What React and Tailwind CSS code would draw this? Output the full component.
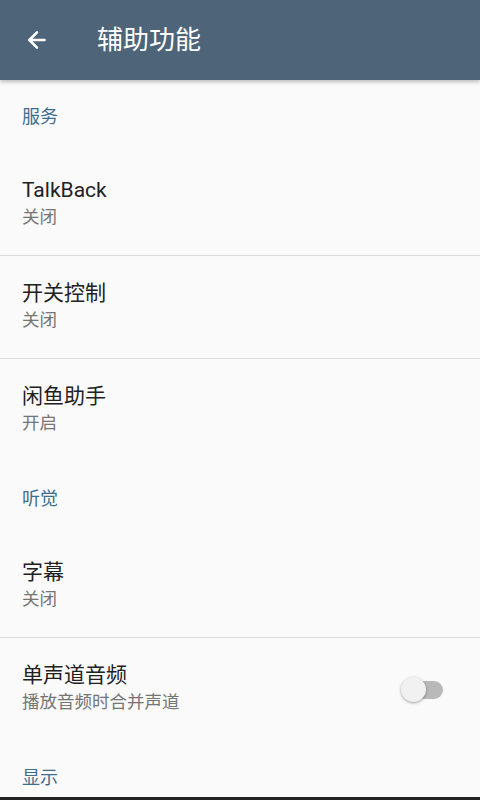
import { ArrowLeft } from 'lucide-react';

const font = { fontFamily: 'Roboto, "Noto Sans CJK SC", sans-serif' };

function Category({ label }) {
  return (
    <div className="h-[73px] flex items-center px-[22px] shrink-0">
      <span className="text-[18px] text-[#3d6d8f]">{label}</span>
    </div>
  );
}

function Item({ title, summary, divider, toggle }) {
  return (
    <div className={`h-[103px] shrink-0 flex items-center px-[22px] ${divider ? 'border-b border-[#dcdcdc]' : ''}`}>
      <div className="flex-1 flex flex-col -mt-[2px]">
        <span className="text-[21px] leading-[28px] text-[#212121]">{title}</span>
        <span className="text-[17.5px] leading-[27px] text-[#757575]">{summary}</span>
      </div>
      {toggle && (
        <div className="relative w-[44px] h-[26px] mr-[14px] flex items-center">
          <div className="absolute left-[8px] right-[1px] h-[18px] rounded-full bg-[#b9b9b9]" />
          <div className="absolute left-[1px] w-[25px] h-[25px] rounded-full bg-[#f1f1f1] shadow-[0_1px_3px_rgba(0,0,0,0.35)]" />
        </div>
      )}
    </div>
  );
}

export default function App() {
  return (
    <div className="w-[480px] h-[800px] overflow-hidden flex flex-col bg-[#fafafa]" style={font}>
      <div className="h-[80px] shrink-0 bg-[#4e6479] flex items-center shadow-[0_2px_4px_rgba(0,0,0,0.25)] relative z-10">
        <ArrowLeft size={26} strokeWidth={2.4} className="text-white ml-[24px]" />
        <span className="ml-[47px] text-[26px] text-white">辅助功能</span>
      </div>
      <div className="flex-1 flex flex-col overflow-hidden">
        <Category label="服务" />
        <Item title="TalkBack" summary="关闭" divider />
        <Item title="开关控制" summary="关闭" divider />
        <Item title="闲鱼助手" summary="开启" />
        <Category label="听觉" />
        <Item title="字幕" summary="关闭" divider />
        <Item title="单声道音频" summary="播放音频时合并声道" toggle />
        <Category label="显示" />
      </div>
      <div className="h-[3px] shrink-0 bg-[#222]" />
    </div>
  );
}
